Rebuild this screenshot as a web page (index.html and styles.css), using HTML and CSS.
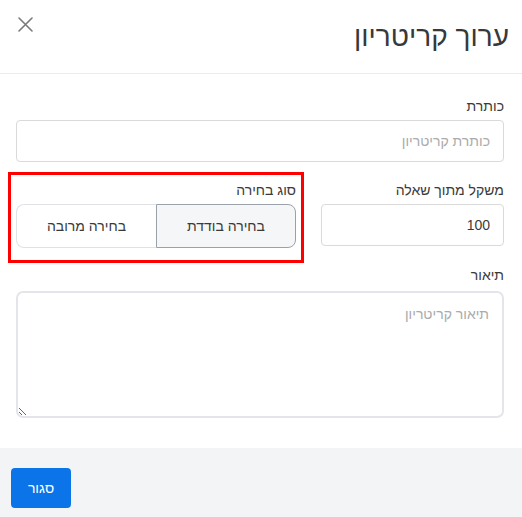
FILE: index.html
```html
<!DOCTYPE html>
<html lang="he" dir="rtl">
<head>
<meta charset="utf-8">
<title>ערוך קריטריון</title>
<link rel="stylesheet" href="styles.css">
</head>
<body>
<div class="modal">
  <header class="modal-header">
    <h1 class="modal-title">ערוך קריטריון</h1>
    <button class="close-btn" type="button" aria-label="סגור">
      <svg width="15" height="15" viewBox="0 0 15 15"><path d="M1 1 L14 14 M14 1 L1 14" stroke="#7a7a7a" stroke-width="1.6" fill="none" stroke-linecap="round"/></svg>
    </button>
  </header>
  <main class="modal-body">
    <label class="field-label first">כותרת</label>
    <input class="text-input" type="text" placeholder="כותרת קריטריון">
    <div class="form-row">
      <div class="col">
        <label class="field-label">משקל מתוך שאלה</label>
        <input class="text-input" type="text" value="100">
      </div>
      <div class="col highlighted">
        <label class="field-label">סוג בחירה</label>
        <div class="segmented">
          <button class="segment selected" type="button">בחירה בודדת</button>
          <button class="segment" type="button">בחירה מרובה</button>
        </div>
      </div>
    </div>
    <label class="field-label desc">תיאור</label>
    <textarea class="text-area" placeholder="תיאור קריטריון"></textarea>
  </main>
  <footer class="modal-footer">
    <button class="primary-btn" type="button">סגור</button>
  </footer>
</div>
</body>
</html>
```

FILE: styles.css
```css
* { box-sizing: border-box; }
html, body {
  margin: 0;
  padding: 0;
  background: #fff;
  font-family: "Liberation Sans", Arial, sans-serif;
  color: #3a3a3a;
}
.modal {
  width: 522px;
  height: 517px;
  display: flex;
  flex-direction: column;
  overflow: hidden;
}
.modal-header {
  height: 74px;
  border-bottom: 1px solid #ececec;
  display: flex;
  justify-content: space-between;
  align-items: center;
  padding: 0 13px 0 18px;
}
.modal-title {
  margin: 0;
  font-size: 28px;
  font-weight: normal;
  color: #383838;
  line-height: 32px;
}
.close-btn {
  align-self: flex-start;
  margin-top: 17px;
  padding: 0;
  border: 0;
  background: none;
  width: 15px;
  height: 15px;
  display: flex;
}
.modal-body {
  padding: 0 18px 30px 16px;
  display: flex;
  flex-direction: column;
  flex: 1;
}
.field-label {
  display: block;
  font-size: 14px;
  line-height: 20px;
  color: #3a3a3a;
  margin-bottom: 4px;
}
.field-label.first { margin-top: 22px; }
.field-label.desc { margin-top: 10px; margin-bottom: 6px; }
.text-input {
  width: 100%;
  height: 42px;
  border: 1px solid #dadada;
  border-radius: 4px;
  padding: 0 13px;
  font-family: inherit;
  font-size: 14px;
  color: #3a3a3a;
  background: #fff;
}
.text-input::placeholder, .text-area::placeholder { color: #ababab; }
.form-row {
  margin-top: 18px;
  display: grid;
  grid-template-columns: 183px 280px;
  column-gap: 25px;
  align-items: start;
}
.col.highlighted {
  outline: 3px solid #ff0000;
  outline-offset: 5px;
  padding-bottom: 7px;
}
.segmented {
  display: grid;
  grid-template-columns: 1fr 1fr;
  height: 44px;
}
.segment {
  font-family: inherit;
  font-size: 14px;
  color: #3a3a3a;
  background: #fff;
  border: 1px solid #e1e2e7;
  border-right: 0;
  border-radius: 8px 0 0 8px;
  padding: 0;
}
.segment.selected {
  background: #f5f6f8;
  border: 1px solid #9ba1ab;
  border-radius: 0 8px 8px 0;
}
.text-area {
  width: 100%;
  height: 127px;
  border: 2px solid #e4e5eb;
  border-radius: 7px;
  padding: 11px 13px;
  font-family: inherit;
  font-size: 14px;
  line-height: 20px;
  resize: vertical;
}
.modal-footer {
  background: #f3f4f6;
  height: 69px;
  padding: 20px 11px 0;
  display: flex;
  justify-content: flex-end;
  align-items: flex-start;
}
.primary-btn {
  width: 60px;
  height: 40px;
  background: #0a74e8;
  color: #fff;
  border: 0;
  border-radius: 4px;
  font-family: inherit;
  font-size: 14px;
  font-weight: normal;
}
```
